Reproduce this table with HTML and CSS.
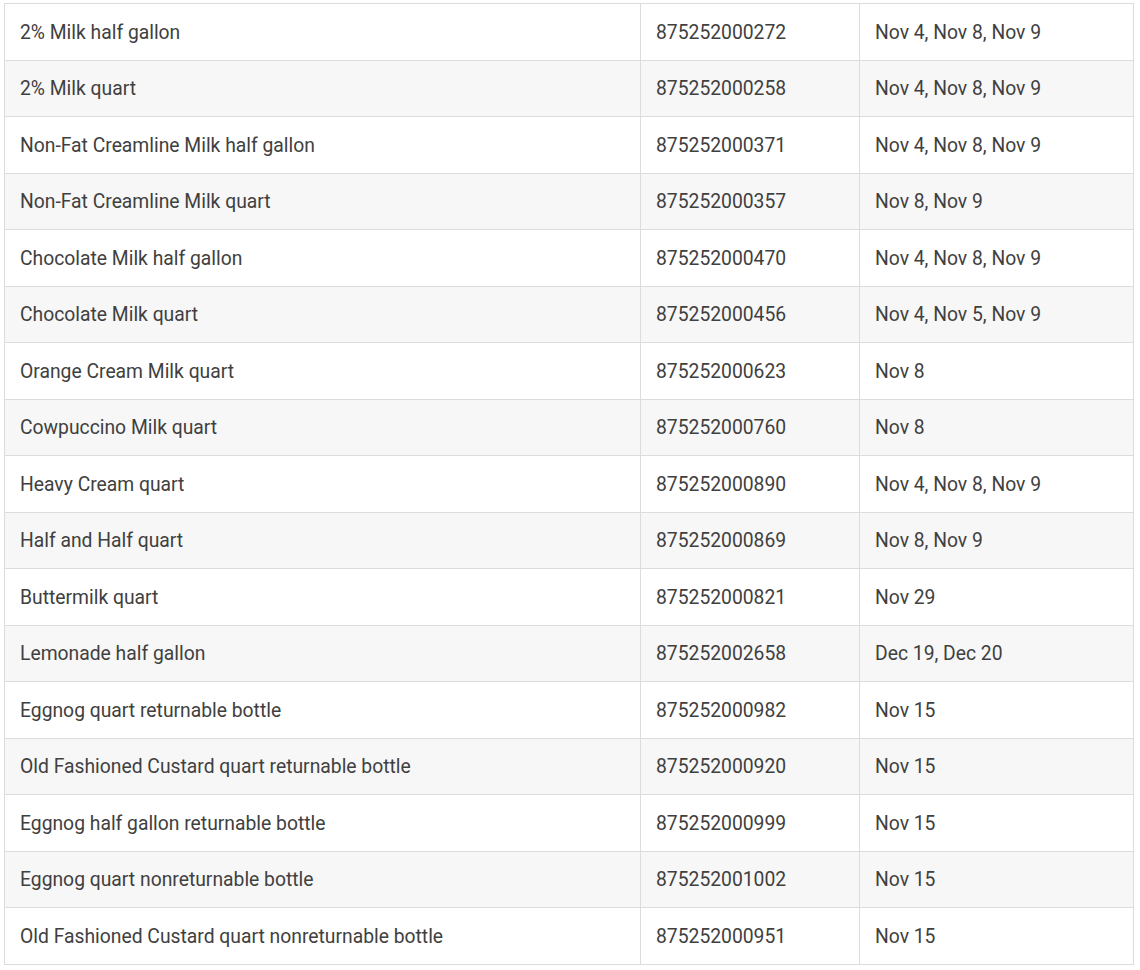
FILE: index.html
```html
<!DOCTYPE html>
<html>
<head>
<meta charset="utf-8">
<link rel="stylesheet" href="styles.css">
</head>
<body>
<div class="wrap">
<table class="recall">
<colgroup><col class="c1"><col class="c2"><col class="c3"></colgroup>
<tbody>
<tr><td><span class="t">2% Milk half gallon</span></td><td><span class="t">875252000272</span></td><td><span class="t">Nov 4, Nov 8, Nov 9</span></td></tr>
<tr><td><span class="t">2% Milk quart</span></td><td><span class="t">875252000258</span></td><td><span class="t">Nov 4, Nov 8, Nov 9</span></td></tr>
<tr><td><span class="t">Non-Fat Creamline Milk half gallon</span></td><td><span class="t">875252000371</span></td><td><span class="t">Nov 4, Nov 8, Nov 9</span></td></tr>
<tr><td><span class="t">Non-Fat Creamline Milk quart</span></td><td><span class="t">875252000357</span></td><td><span class="t">Nov 8, Nov 9</span></td></tr>
<tr><td><span class="t">Chocolate Milk half gallon</span></td><td><span class="t">875252000470</span></td><td><span class="t">Nov 4, Nov 8, Nov 9</span></td></tr>
<tr><td><span class="t">Chocolate Milk quart</span></td><td><span class="t">875252000456</span></td><td><span class="t">Nov 4, Nov 5, Nov 9</span></td></tr>
<tr><td><span class="t">Orange Cream Milk quart</span></td><td><span class="t">875252000623</span></td><td><span class="t">Nov 8</span></td></tr>
<tr><td><span class="t">Cowpuccino Milk quart</span></td><td><span class="t">875252000760</span></td><td><span class="t">Nov 8</span></td></tr>
<tr><td><span class="t">Heavy Cream quart</span></td><td><span class="t">875252000890</span></td><td><span class="t">Nov 4, Nov 8, Nov 9</span></td></tr>
<tr><td><span class="t">Half and Half quart</span></td><td><span class="t">875252000869</span></td><td><span class="t">Nov 8, Nov 9</span></td></tr>
<tr><td><span class="t">Buttermilk quart</span></td><td><span class="t">875252000821</span></td><td><span class="t">Nov 29</span></td></tr>
<tr><td><span class="t">Lemonade half gallon</span></td><td><span class="t">875252002658</span></td><td><span class="t">Dec 19, Dec 20</span></td></tr>
<tr><td><span class="t">Eggnog quart returnable bottle</span></td><td><span class="t">875252000982</span></td><td><span class="t">Nov 15</span></td></tr>
<tr><td><span class="t">Old Fashioned Custard quart returnable bottle</span></td><td><span class="t">875252000920</span></td><td><span class="t">Nov 15</span></td></tr>
<tr><td><span class="t">Eggnog half gallon returnable bottle</span></td><td><span class="t">875252000999</span></td><td><span class="t">Nov 15</span></td></tr>
<tr><td><span class="t">Eggnog quart nonreturnable bottle</span></td><td><span class="t">875252001002</span></td><td><span class="t">Nov 15</span></td></tr>
<tr><td><span class="t">Old Fashioned Custard quart nonreturnable bottle</span></td><td><span class="t">875252000951</span></td><td><span class="t">Nov 15</span></td></tr>
</tbody>
</table>
</div>
</body>
</html>
```
FILE: styles.css
```css
html, body {
  margin: 0;
  padding: 0;
  background: #ffffff;
}
.wrap {
  padding: 3px 0 0 4px;
}
.recall {
  border-collapse: collapse;
  table-layout: fixed;
  width: 1129px;
  font-family: Roboto, "Liberation Sans", sans-serif;
  font-size: 20px;
  color: #404040;
}
.c1 { width: 636px; }
.c2 { width: 219px; }
.c3 { width: 274px; }
.recall td {
  border: 1px solid #dcdcdc;
  height: 55.5px;
  padding: 0 15px;
  vertical-align: middle;
  white-space: nowrap;
  overflow: hidden;
}
.recall tr:nth-child(even) td {
  background: #f7f7f7;
}
.t {
  display: inline-block;
  transform: scaleX(0.965);
  transform-origin: left center;
  line-height: 24px;
}
```
